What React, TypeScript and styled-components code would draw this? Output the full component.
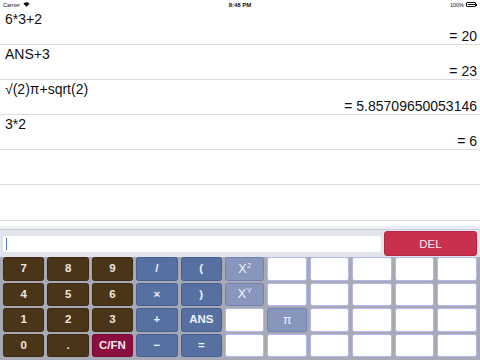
import React from "react";
import styled, { createGlobalStyle } from "styled-components";

const GlobalStyle = createGlobalStyle`
  html, body {
    margin: 0;
    padding: 0;
    background: #ffffff;
    font-family: "Liberation Sans", Arial, Helvetica, sans-serif;
  }
  * {
    box-sizing: border-box;
  }
`;

type KeyKind = "num" | "op" | "fn" | "clear" | "blank";

type KeyDef = {
  label?: React.ReactNode;
  kind: KeyKind;
};

const history = [
  { expr: "6*3+2", result: "= 20" },
  { expr: "ANS+3", result: "= 23" },
  { expr: "√(2)π+sqrt(2)", result: "= 5.85709650053146" },
  { expr: "3*2", result: "= 6" },
  { expr: "", result: "" },
  { expr: "", result: "" },
  { expr: "", result: "" },
];

const blank: KeyDef = { kind: "blank" };

const keys: KeyDef[] = [
  // row 1
  { label: "7", kind: "num" },
  { label: "8", kind: "num" },
  { label: "9", kind: "num" },
  { label: "/", kind: "op" },
  { label: "(", kind: "op" },
  {
    label: (
      <>
        X<sup>2</sup>
      </>
    ),
    kind: "fn",
  },
  blank,
  blank,
  blank,
  blank,
  blank,
  // row 2
  { label: "4", kind: "num" },
  { label: "5", kind: "num" },
  { label: "6", kind: "num" },
  { label: "×", kind: "op" },
  { label: ")", kind: "op" },
  {
    label: (
      <>
        X<sup>Y</sup>
      </>
    ),
    kind: "fn",
  },
  blank,
  blank,
  blank,
  blank,
  blank,
  // row 3
  { label: "1", kind: "num" },
  { label: "2", kind: "num" },
  { label: "3", kind: "num" },
  { label: "+", kind: "op" },
  { label: "ANS", kind: "op" },
  blank,
  { label: "π", kind: "fn" },
  blank,
  blank,
  blank,
  blank,
  // row 4
  { label: "0", kind: "num" },
  { label: ".", kind: "num" },
  { label: "C/FN", kind: "clear" },
  { label: "−", kind: "op" },
  { label: "=", kind: "op" },
  blank,
  blank,
  blank,
  blank,
  blank,
  blank,
];

const keyColors: Record<KeyKind, { bg: string; border: string; color: string }> = {
  num: { bg: "#4b3519", border: "#3b2912", color: "#ece8e0" },
  op: { bg: "#5670a2", border: "#47608f", color: "#eef1f7" },
  fn: { bg: "#8896bd", border: "#7381b0", color: "#f2f4fa" },
  clear: { bg: "#8a0f3f", border: "#750a33", color: "#f6e8ee" },
  blank: { bg: "#ffffff", border: "#b3b7ec", color: "#333" },
};

const Screen = styled.div`
  width: 480px;
  height: 360px;
  display: flex;
  flex-direction: column;
  overflow: hidden;
  background: #ffffff;
`;

const StatusBar = styled.div`
  height: 9.4px;
  flex: none;
  display: grid;
  grid-template-columns: 1fr auto 1fr;
  align-items: center;
  padding: 0 3px;
  font-size: 5.5px;
  color: #111;
`;

const Carrier = styled.div`
  display: flex;
  align-items: center;
  gap: 3px;
`;

const Clock = styled.div`
  font-weight: 700;
  font-size: 6px;
`;

const BatteryGroup = styled.div`
  display: flex;
  justify-content: flex-end;
  align-items: center;
  gap: 2px;
  padding-right: 1px;
`;

const Battery = styled.div`
  width: 10px;
  height: 4.5px;
  border: 0.8px solid #111;
  border-radius: 1px;
  padding: 0.5px;
  position: relative;
  &::before {
    content: "";
    display: block;
    width: 100%;
    height: 100%;
    background: #111;
  }
  &::after {
    content: "";
    position: absolute;
    right: -2px;
    top: 1px;
    width: 1px;
    height: 1.6px;
    background: #111;
  }
`;

const History = styled.div`
  flex: 1;
  overflow: hidden;
`;

const Entry = styled.div`
  height: 35.2px;
  border-bottom: 1px solid #dcdcdc;
  display: flex;
  flex-direction: column;
  justify-content: space-between;
  padding: 1.5px 3px 0 5px;
  font-size: 14px;
  line-height: 16px;
  color: #111;
`;

const Expr = styled.div`
  text-align: left;
  min-height: 16px;
`;

const Result = styled.div`
  text-align: right;
  min-height: 16px;
`;

const Keypad = styled.div`
  flex: none;
  height: 134px;
  border-top: 3px solid #eceef2;
  background: #e2e5ed;
  display: flex;
  flex-direction: column;
`;

const InputRow = styled.div`
  height: 28px;
  border-top: 1px solid #c8ccdb;
  display: flex;
  align-items: center;
  gap: 3px;
  padding: 0 3px;
`;

const InputField = styled.div`
  flex: 1;
  height: 16px;
  background: #ffffff;
  border-radius: 3px;
  display: flex;
  align-items: center;
  padding-left: 3px;
`;

const Caret = styled.div`
  width: 1px;
  height: 12px;
  background: #5b7bd3;
`;

const DelButton = styled.div`
  width: 93px;
  height: 25px;
  border-radius: 3px;
  background: #c9304d;
  border: 1px solid #b32843;
  color: #fbeef1;
  font-size: 11.5px;
  display: flex;
  align-items: center;
  justify-content: center;
`;

const KeyGrid = styled.div`
  flex: 1;
  display: grid;
  grid-template-columns: repeat(5, 1.048fr) repeat(6, 1fr);
  grid-template-rows: repeat(4, 23.5px);
  column-gap: 3px;
  row-gap: 2px;
  padding: 0 3px 3px;
  background: #a7a9b4;
`;

const Key = styled.div<{ $kind: KeyKind }>`
  background: ${(p) => keyColors[p.$kind].bg};
  border: 1px solid ${(p) => keyColors[p.$kind].border};
  color: ${(p) => keyColors[p.$kind].color};
  border-radius: 2.5px;
  display: flex;
  align-items: center;
  justify-content: center;
  font-size: ${(p) => (p.$kind === "fn" ? "12.5px" : "11.5px")};
  font-weight: ${(p) => (p.$kind === "fn" ? 400 : 700)};
`;

const KeyLabel = styled.span`
  line-height: 1;

  sup {
    font-size: 7.5px;
    line-height: 0;
    vertical-align: 5px;
    margin-left: 0.5px;
  }
`;

function WifiIcon() {
  return (
    <svg width="7" height="5" viewBox="0 0 14 10">
      <path d="M7 9.5 L0.8 3.3 A9 9 0 0 1 13.2 3.3 Z" fill="#111" />
    </svg>
  );
}

export default function App() {
  return (
    <>
      <GlobalStyle />
      <Screen>
        <StatusBar>
          <Carrier>
            Carrier
            <WifiIcon />
          </Carrier>
          <Clock>8:48 PM</Clock>
          <BatteryGroup>
            100%
            <Battery />
          </BatteryGroup>
        </StatusBar>

        <History>
          {history.map((h, i) => (
            <Entry key={i}>
              <Expr>{h.expr}</Expr>
              <Result>{h.result}</Result>
            </Entry>
          ))}
        </History>

        <Keypad>
          <InputRow>
            <InputField>
              <Caret />
            </InputField>
            <DelButton>DEL</DelButton>
          </InputRow>
          <KeyGrid>
            {keys.map((k, i) => (
              <Key key={i} $kind={k.kind}>
                {k.label !== undefined && <KeyLabel>{k.label}</KeyLabel>}
              </Key>
            ))}
          </KeyGrid>
        </Keypad>
      </Screen>
    </>
  );
}
